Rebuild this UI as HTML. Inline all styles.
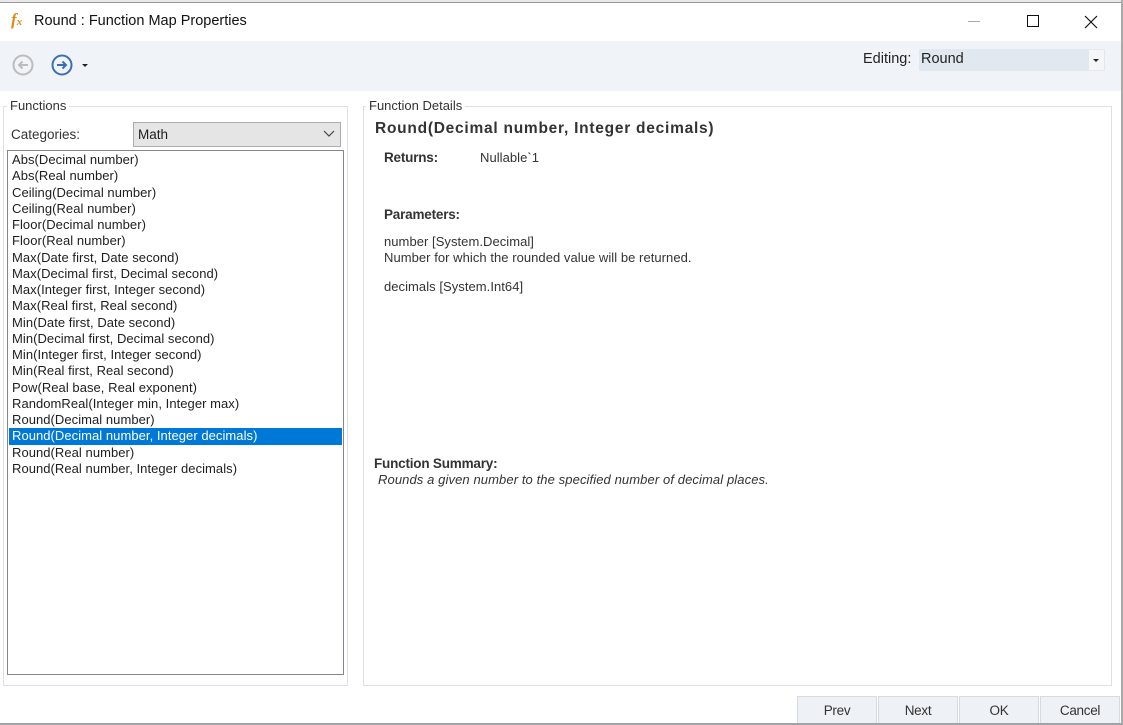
<!DOCTYPE html>
<html><head><meta charset="utf-8"><style>
*{margin:0;padding:0;box-sizing:border-box}
body{width:1123px;height:725px;background:#fff;font-family:"Liberation Sans",sans-serif;color:#1e1e1e;position:relative;overflow:hidden;font-size:12px}
.a{position:absolute;white-space:nowrap}
.gb{position:absolute;border:1px solid #dcdfe3}
.lg{position:absolute;background:#fff;padding:0 3px;color:#333;font-size:13px}
.li{height:16.25px;line-height:16px;padding-left:3px;font-size:13px;letter-spacing:0.05px}
.sel{background:#0078d7;color:#fff}
.btn{position:absolute;top:696px;height:28px;width:80px;background:#eef2f6;border:1px solid #d6dbe1;text-align:center;line-height:27px;font-size:13.5px;color:#333;letter-spacing:-0.3px}
.t{font-size:13px;color:#333;letter-spacing:0.05px}
</style></head><body>
<div class="a" style="left:0;top:0;width:1123px;height:3px;background:#e8e8e8;border-bottom:1px solid #999"></div>
<div class="a" style="left:11px;top:10px;font-family:'Liberation Serif',serif;font-style:italic;font-weight:bold;color:#e08a1e;font-size:17px">f<span style="font-size:11px">x</span></div>
<div class="a" style="left:34px;top:13px;font-size:14.5px;color:#111">Round : Function Map Properties</div>
<div class="a" style="left:968px;top:21px;width:12px;height:1px;background:#aaa"></div>
<div class="a" style="left:1027px;top:15px;width:12px;height:12px;border:1px solid #111"></div>
<svg class="a" style="left:1084px;top:15px" width="14" height="14"><path d="M1 1L13 13M13 1L1 13" stroke="#111" stroke-width="1.2"/></svg>
<div class="a" style="left:0;top:41px;width:1123px;height:50px;background:#f0f4f8"></div>
<svg class="a" style="left:12px;top:54px" width="24" height="24"><circle cx="11" cy="11" r="9.5" fill="none" stroke="#bcbcbc" stroke-width="2"/><path d="M16 11H7M10.5 7.5L7 11l3.5 3.5" fill="none" stroke="#bcbcbc" stroke-width="2"/></svg>
<svg class="a" style="left:50px;top:54px" width="24" height="24"><circle cx="12" cy="11" r="9.5" fill="none" stroke="#3b6fb6" stroke-width="2"/><path d="M7 11h9M12.5 7.5L16 11l-3.5 3.5" fill="none" stroke="#3b6fb6" stroke-width="2"/></svg>
<div class="a" style="left:82px;top:64px;border-left:3px solid transparent;border-right:3px solid transparent;border-top:3px solid #222"></div>
<div class="a" style="left:863px;top:51px;font-size:14.5px;color:#222">Editing:</div>
<div class="a" style="left:919px;top:49px;width:186px;height:22px;background:#e1e8ef"></div>
<div class="a" style="left:921px;top:51px;font-size:14.5px;color:#222">Round</div>
<div class="a" style="left:1089px;top:50px;width:15px;height:20px;background:#f4f6f8"></div>
<div class="a" style="left:1093px;top:59px;border-left:3px solid transparent;border-right:3px solid transparent;border-top:3px solid #222"></div>

<div class="gb" style="left:3px;top:106px;width:345px;height:580px"></div>
<div class="lg" style="left:7px;top:98px">Functions</div>
<div class="a" style="left:11px;top:127px;font-size:13.5px;color:#333">Categories:</div>
<div class="a" style="left:133px;top:122px;width:208px;height:25px;background:#e5e5e5;border:1px solid #adadad"></div>
<div class="a" style="left:138px;top:127px;font-size:13.5px">Math</div>
<svg class="a" style="left:323px;top:130px" width="12" height="8"><path d="M1 1l5 5 5-5" fill="none" stroke="#444" stroke-width="1.2"/></svg>
<div class="a" style="left:7px;top:150px;width:337px;height:525px;border:1px solid #828790;padding:1px">
<div class="li">Abs(Decimal number)</div><div class="li">Abs(Real number)</div><div class="li">Ceiling(Decimal number)</div><div class="li">Ceiling(Real number)</div><div class="li">Floor(Decimal number)</div><div class="li">Floor(Real number)</div><div class="li">Max(Date first, Date second)</div><div class="li">Max(Decimal first, Decimal second)</div><div class="li">Max(Integer first, Integer second)</div><div class="li">Max(Real first, Real second)</div><div class="li">Min(Date first, Date second)</div><div class="li">Min(Decimal first, Decimal second)</div><div class="li">Min(Integer first, Integer second)</div><div class="li">Min(Real first, Real second)</div><div class="li">Pow(Real base, Real exponent)</div><div class="li">RandomReal(Integer min, Integer max)</div><div class="li">Round(Decimal number)</div><div class="li sel">Round(Decimal number, Integer decimals)</div><div class="li">Round(Real number)</div><div class="li">Round(Real number, Integer decimals)</div>
</div>

<div class="gb" style="left:363px;top:106px;width:749px;height:580px"></div>
<div class="lg" style="left:366px;top:98px">Function Details</div>
<div class="a" style="left:375px;top:120px;font-size:15.5px;font-weight:bold;color:#333;letter-spacing:0.75px">Round(Decimal number, Integer decimals)</div>
<div class="a" style="left:384px;top:150px;font-size:13.5px;font-weight:bold;color:#333;letter-spacing:-0.2px">Returns:</div>
<div class="a t" style="left:480px;top:150px">Nullable`1</div>
<div class="a" style="left:384px;top:207px;font-size:13.5px;font-weight:bold;color:#333;letter-spacing:-0.2px">Parameters:</div>
<div class="a t" style="left:384px;top:234px;line-height:16px">number [System.Decimal]<br>Number for which the rounded value will be returned.</div>
<div class="a t" style="left:384px;top:279px">decimals [System.Int64]</div>
<div class="a" style="left:374px;top:456px;font-size:13.5px;font-weight:bold;color:#333;letter-spacing:-0.2px">Function Summary:</div>
<div class="a t" style="left:378px;top:472px;font-style:italic;letter-spacing:0.1px">Rounds a given number to the specified number of decimal places.</div>

<div class="a" style="left:1121px;top:0;width:2px;height:725px;background:#aaa"></div>
<div class="btn" style="left:797px">Prev</div>
<div class="btn" style="left:878px">Next</div>
<div class="btn" style="left:959px">OK</div>
<div class="btn" style="left:1040px">Cancel</div>
<div class="a" style="left:0;top:723px;width:1123px;height:2px;background:#a0a4a8"></div>
</body></html>
